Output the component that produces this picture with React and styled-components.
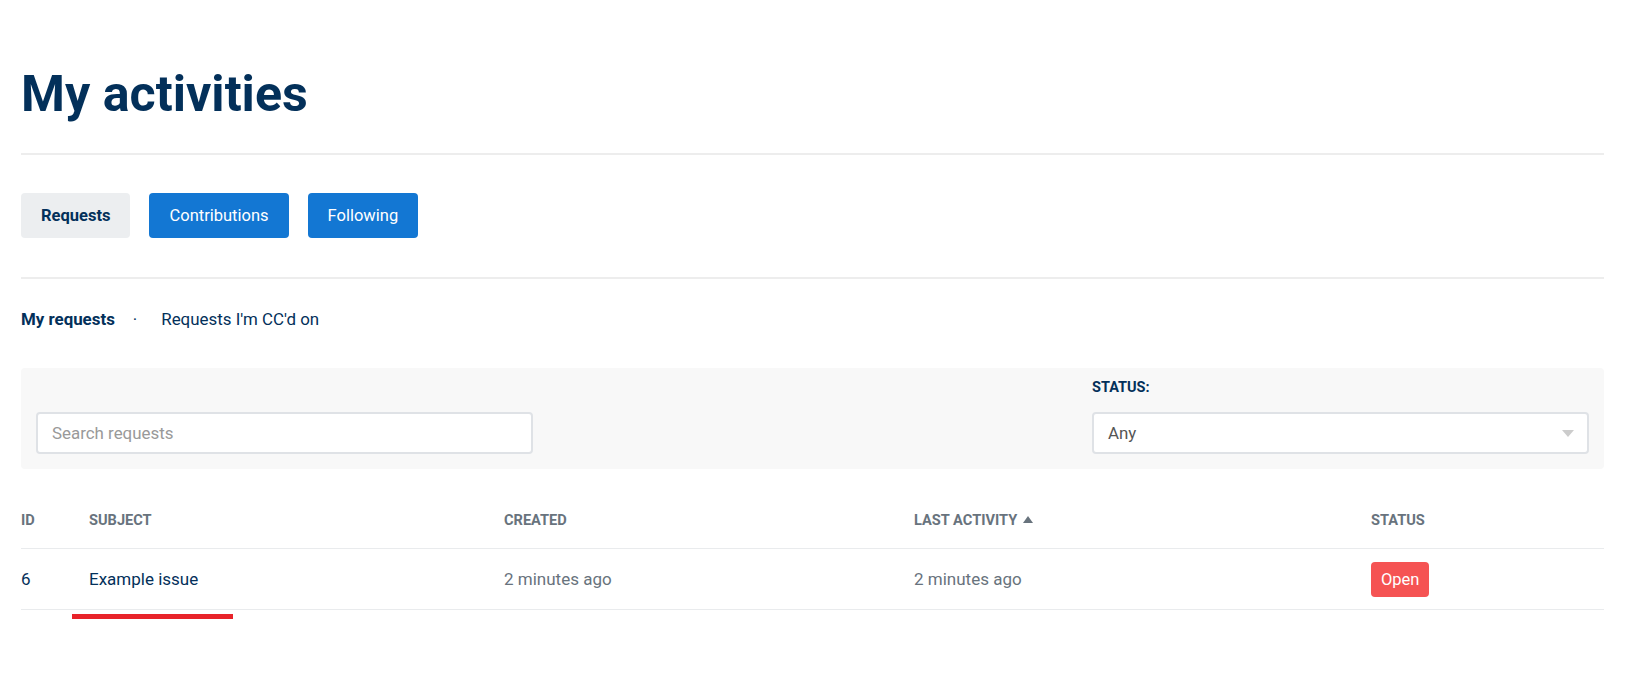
import React from 'react';
import styled, { createGlobalStyle } from 'styled-components';

const GlobalStyle = createGlobalStyle`
  html, body {
    margin: 0;
    padding: 0;
    background: #fff;
    font-family: Roboto, "Liberation Sans", Arial, sans-serif;
    color: #03305a;
  }
  * {
    box-sizing: border-box;
  }
`;

const Page = styled.div`
  padding: 0 31px 40px 21px;
`;

const Title = styled.h1`
  margin: 0;
  padding: 64px 0 29px 0;
  font-size: 50.2px;
  line-height: 60px;
  font-weight: 700;
  color: #03305a;
`;

const Rule = styled.hr`
  margin: 0;
  height: 2px;
  border: none;
  background: #ededed;
`;

const TabBar = styled.div`
  display: flex;
  gap: 19px;
  padding: 38px 0 39px 0;
`;

const TabButton = styled.button`
  height: 45px;
  padding: 0 20px;
  border: none;
  border-radius: 4px;
  font-family: inherit;
  font-size: 16.5px;
  font-weight: ${(p) => (p.$active ? 700 : 400)};
  background: ${(p) => (p.$active ? '#eceef0' : '#1377d3')};
  color: ${(p) => (p.$active ? '#03305a' : '#fff')};
  cursor: pointer;
`;

const SubNav = styled.nav`
  display: flex;
  align-items: center;
  padding: 30px 0 39px 0;
  font-size: 16.9px;
  line-height: 20px;
`;

const SubLink = styled.a`
  color: #03305a;
  font-weight: ${(p) => (p.$active ? 700 : 400)};
`;

const Dot = styled.span`
  margin: 0 24px 0 18px;
  color: #03305a;
`;

const FilterPanel = styled.div`
  display: grid;
  grid-template-columns: 497px 1fr 497px;
  align-items: end;
  background: #f8f8f8;
  border-radius: 4px;
  padding: 11px 15px 15px 15px;
`;

const Field = styled.div`
  display: flex;
  flex-direction: column;
  grid-column: ${(p) => p.$col};
`;

const Label = styled.label`
  font-size: 14.5px;
  line-height: 17px;
  font-weight: 700;
  color: #03305a;
  text-transform: uppercase;
  margin-bottom: 16px;
`;

const Input = styled.input`
  height: 42px;
  padding: 0 14px;
  border: 2px solid #dfe2e6;
  border-radius: 4px;
  background: #fff;
  font-family: inherit;
  font-size: 16.9px;
  color: #03305a;
  outline: none;
  &::placeholder {
    color: #999;
  }
`;

const SelectBox = styled.div`
  height: 42px;
  padding: 0 13px 0 14px;
  border: 2px solid #dfe2e6;
  border-radius: 4px;
  background: #fff;
  display: flex;
  align-items: center;
  justify-content: space-between;
  font-size: 16.9px;
  color: #555;
`;

const Caret = styled.span`
  width: 0;
  height: 0;
  border-left: 6px solid transparent;
  border-right: 6px solid transparent;
  border-top: 7px solid #cccccc;
`;

const Table = styled.div`
  position: relative;
  margin-top: 23px;
`;

const Row = styled.div`
  display: grid;
  grid-template-columns: 68px 415px 410px 457px 1fr;
  align-items: center;
  height: ${(p) => (p.$head ? '57px' : '61px')};
  border-bottom: 1px solid #e9ebed;
`;

const HeadCell = styled.div`
  font-size: 14.6px;
  font-weight: 700;
  text-transform: uppercase;
  color: #68737d;
  display: flex;
  align-items: center;
  gap: 6px;
`;

const Cell = styled.div`
  font-size: 17px;
  color: ${(p) => (p.$muted ? '#68737d' : '#03305a')};
`;

const SortUp = styled.span`
  width: 0;
  height: 0;
  border-left: 5.5px solid transparent;
  border-right: 5.5px solid transparent;
  border-bottom: 7px solid #68737d;
  margin-bottom: 2px;
`;

const Badge = styled.span`
  display: inline-block;
  padding: 0 10px;
  height: 35px;
  line-height: 35px;
  border-radius: 4px;
  background: #f55353;
  color: #fff;
  font-size: 16.5px;
`;

const Marker = styled.div`
  position: absolute;
  left: 51px;
  top: 122px;
  width: 161px;
  height: 5px;
  background: #e8232a;
`;

export default function App() {
  return (
    <>
      <GlobalStyle />
      <Page>
        <Title>My activities</Title>
        <Rule />
        <TabBar>
          <TabButton $active>Requests</TabButton>
          <TabButton>Contributions</TabButton>
          <TabButton>Following</TabButton>
        </TabBar>
        <Rule />
        <SubNav>
          <SubLink $active>My requests</SubLink>
          <Dot>·</Dot>
          <SubLink>Requests I'm CC'd on</SubLink>
        </SubNav>
        <FilterPanel>
          <Field $col="1">
            <Input placeholder="Search requests" />
          </Field>
          <Field $col="3">
            <Label>Status:</Label>
            <SelectBox>
              <span>Any</span>
              <Caret />
            </SelectBox>
          </Field>
        </FilterPanel>
        <Table>
          <Row $head>
            <HeadCell>ID</HeadCell>
            <HeadCell>Subject</HeadCell>
            <HeadCell>Created</HeadCell>
            <HeadCell>
              Last activity <SortUp />
            </HeadCell>
            <HeadCell>Status</HeadCell>
          </Row>
          <Row>
            <Cell>6</Cell>
            <Cell>Example issue</Cell>
            <Cell $muted>2 minutes ago</Cell>
            <Cell $muted>2 minutes ago</Cell>
            <Cell>
              <Badge>Open</Badge>
            </Cell>
          </Row>
          <Marker />
        </Table>
      </Page>
    </>
  );
}
